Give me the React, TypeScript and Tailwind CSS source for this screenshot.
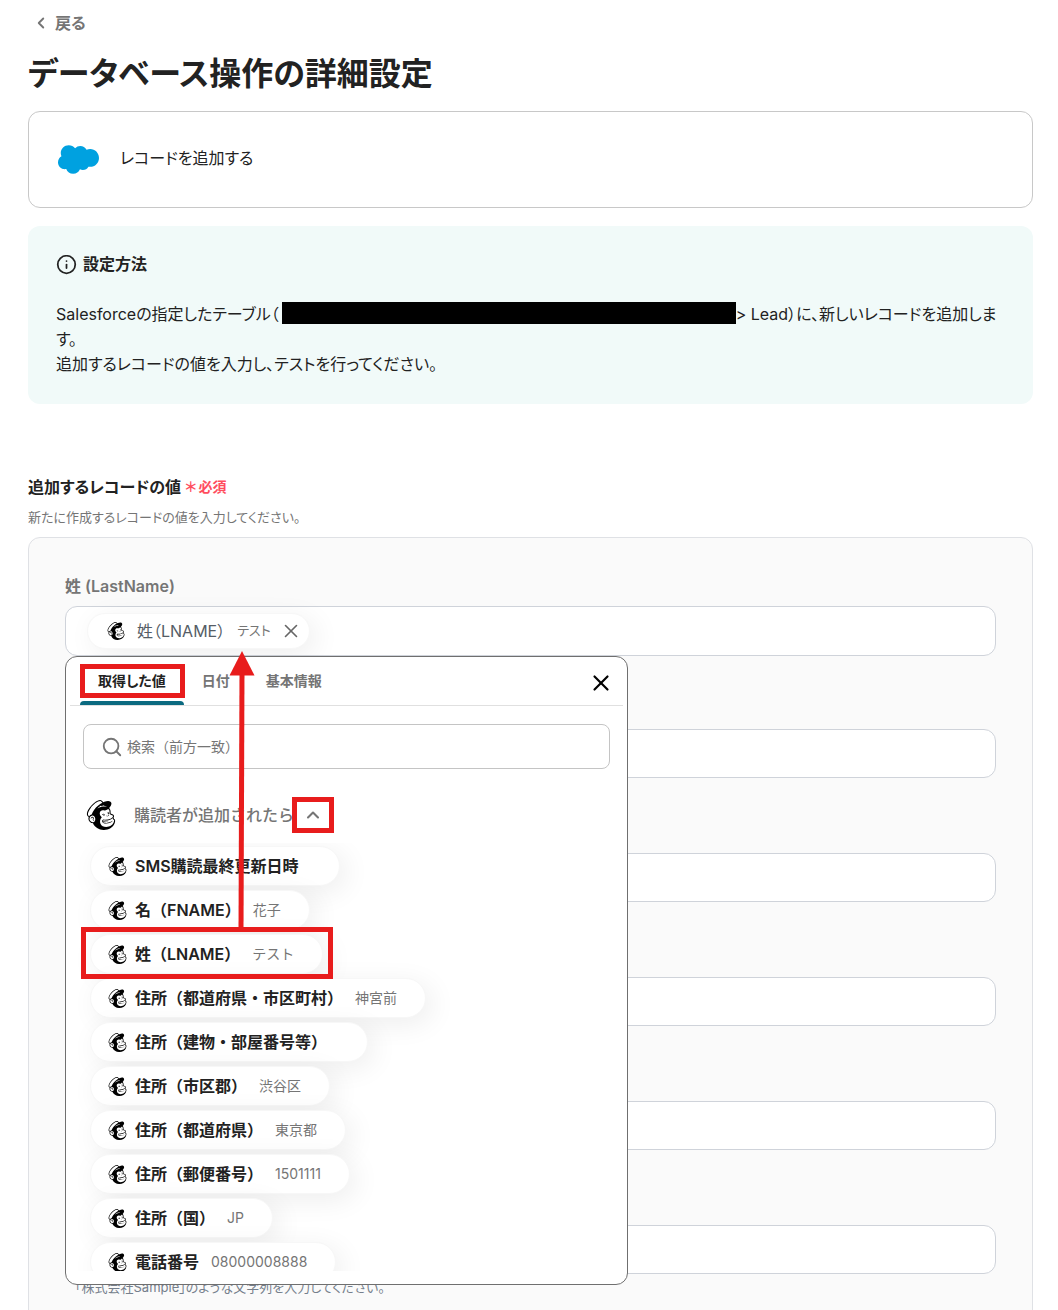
import { useState } from "react";
import { ChevronLeft, ChevronUp, Info, Search, X } from "lucide-react";
import { SiMailchimp } from "react-icons/si";

interface RecordField {
  id: string;
  help?: string;
}

interface OutputValue {
  name: string;
  value?: string;
  marked?: boolean;
}

const tabs = ["取得した値", "日付", "基本情報"];

const fields: RecordField[] = [
  { id: "FirstName" },
  { id: "Email" },
  { id: "Phone" },
  { id: "Title" },
  { id: "Company", help: "「株式会社Sample」のような文字列を入力してください。" },
];

const outputs: OutputValue[] = [
  { name: "SMS購読最終更新日時" },
  { name: "名（FNAME）", value: "花子" },
  { name: "姓（LNAME）", value: "テスト", marked: true },
  { name: "住所（都道府県・市区町村）", value: "神宮前" },
  { name: "住所（建物・部屋番号等）" },
  { name: "住所（市区郡）", value: "渋谷区" },
  { name: "住所（都道府県）", value: "東京都" },
  { name: "住所（郵便番号）", value: "1501111" },
  { name: "住所（国）", value: "JP" },
  { name: "電話番号", value: "08000008888" },
];

function SalesforceLogo() {
  return (
    <svg viewBox="0 3.6 24 16.8" className="h-[29px] w-[41px] shrink-0" fill="#00a1e0" aria-hidden="true">
      <path d="M10.006 5.415a4.195 4.195 0 013.045-1.306c1.56 0 2.954.9 3.69 2.205.63-.3 1.35-.45 2.1-.45 2.85 0 5.159 2.34 5.159 5.22s-2.31 5.22-5.176 5.22c-.345 0-.69-.044-1.02-.104a3.75 3.75 0 01-3.3 1.95c-.6 0-1.155-.15-1.65-.375A4.314 4.314 0 018.88 20.4a4.302 4.302 0 01-4.05-2.82c-.27.062-.54.076-.825.076-2.204 0-4.005-1.8-4.005-4.05 0-1.5.811-2.805 2.01-3.51-.255-.57-.39-1.2-.39-1.846 0-2.58 2.1-4.65 4.65-4.65 1.53 0 2.85.705 3.72 1.8" />
    </svg>
  );
}

// Red frame drawn around the element that it sits in
function Marker({ className }: { className: string }) {
  return (
    <span
      aria-hidden="true"
      className={`pointer-events-none absolute border-5 border-[#e81c1c] ${className}`}
    />
  );
}

// Pop-up list of the values that can be put into the field
function ValuePicker() {
  const [activeTab, setActiveTab] = useState(tabs[0]);
  const [query, setQuery] = useState("");

  return (
    <div className="absolute top-full left-0 z-10 w-[563px] rounded-xl border border-[#6f6f6f] bg-white px-1 pb-[13px]">
      {/* Tabs */}
      <div className="flex h-[49px] items-stretch border-b border-[#e0e0e0] pl-[10px] text-sm font-semibold text-[#757575] [font-feature-settings:'palt']">
        {tabs.map((tab) => (
          <button
            key={tab}
            type="button"
            onClick={() => setActiveTab(tab)}
            className={
              tab === activeTab
                ? "relative px-[18px] text-[#222]"
                : "relative px-[18px]"
            }
          >
            {tab}
            {tab === activeTab && (
              <>
                <span className="absolute inset-x-0 bottom-0 h-1 rounded-t bg-[#0b6a80]" />
                <Marker className="top-[7px] -right-px left-0 h-[34px]" />
              </>
            )}
          </button>
        ))}
        <button type="button" aria-label="閉じる" className="mr-[9px] ml-auto pt-1 text-black">
          <X size={26} strokeWidth={2} />
        </button>
      </div>

      {/* Search */}
      <label className="mx-[13px] mt-[18px] flex h-[45px] items-center gap-1 rounded-lg border border-[#c4c4c4] pl-[17px] text-[#757575]">
        <Search size={22} className="shrink-0" />
        <input
          type="text"
          value={query}
          onChange={(e) => setQuery(e.target.value)}
          placeholder="検索（前方一致）"
          aria-label="検索（前方一致）"
          className="w-full text-sm outline-none placeholder:text-[#757575]"
        />
      </label>

      {/* Trigger that the values come from */}
      <div className="mt-[17px] flex h-[57px] items-center pl-4">
        <SiMailchimp size={30} className="shrink-0 text-black" />
        <span className="ml-[18px] text-base font-medium text-[#757575]">購読者が追加されたら</span>
        <button type="button" aria-label="折りたたむ" className="relative -ml-0.5 flex h-9 w-[42px] items-center justify-center text-[#757575]">
          <ChevronUp size={20} strokeWidth={2.5} />
          <Marker className="inset-0" />
        </button>
      </div>

      {/* Values */}
      <div className="relative">
        <ul className="flex h-[428px] flex-col items-start gap-1 overflow-hidden pt-[3px] pl-5">
          {outputs.map((output) => (
            <li key={output.name}>
              <button
                type="button"
                className="flex h-10 items-center rounded-full border border-[#f7f7f7] bg-white pr-7 pl-[17px] shadow-[6px_6px_28px_rgba(0,0,0,0.07)]"
              >
                <SiMailchimp size={19} className="text-black" />
                <span className="ml-2 text-base font-semibold text-[#222]">{output.name}</span>
                <span className="ml-3 text-sm text-[#757575]">{output.value}</span>
              </button>
              {output.marked && <Marker className="top-[84px] left-[11px] h-[52px] w-[252px]" />}
            </li>
          ))}
        </ul>
      </div>

      {/* Arrow from the marked value up to the field */}
      <svg
        aria-hidden="true"
        viewBox="0 0 26 280"
        className="pointer-events-none absolute -top-[6px] left-[163px] h-[280px] w-[26px]"
      >
        <path d="M13 20 12 280" stroke="#e81c1c" strokeWidth="5" />
        <path d="M13 0 25.500 24.500H.5Z" fill="#e81c1c" />
      </svg>
    </div>
  );
}

export default function App() {
  const [selected, setSelected] = useState(true);

  return (
    <div className="h-screen overflow-hidden bg-white pr-[25px] pl-7 font-['Inter','Noto_Sans_CJK_JP',sans-serif] text-[#222]">
      <a
        href="#back"
        className="inline-flex items-center gap-[5px] pt-[11px] pl-1 text-base leading-6 font-semibold text-[#757575] [font-feature-settings:'palt']"
      >
        <ChevronLeft size={18} strokeWidth={2.5} />
        戻る
      </a>
      <h1 className="mt-[14px] text-[32px] leading-[44px] font-semibold [font-feature-settings:'palt']">
        データベース操作の詳細設定
      </h1>

      <main className="[font-feature-settings:'palt']">
        <section className="mt-[15px] flex h-[97px] items-center gap-[21px] rounded-xl border border-[#c8c8c8] pl-[29px] text-base">
          <SalesforceLogo />
          <span className="pb-1">レコードを追加する</span>
        </section>

        <section className="mt-[18px] rounded-xl bg-[#f1faf9] px-7 pt-[26px] pb-[27px]">
          <h2 className="flex items-center gap-[6px] text-base leading-6 font-semibold">
            <Info size={21} />
            設定方法
          </h2>
          <p className="mt-[26px] text-base leading-[25px]">
            Salesforceの指定したテーブル（
            <span className="ml-[3px] inline-block h-[22px] w-[454px] bg-black align-top" />
            &gt; Lead）に、新しいレコードを追加します。
            <br />
            追加するレコードの値を入力し、テストを行ってください。
          </p>
        </section>

        <h2 className="mt-[71px] flex items-center gap-1 text-base leading-6 font-semibold">
          追加するレコードの値
          <span className="flex gap-0.5 text-sm text-[#ff4d5e]">
            <span>＊</span>
            <span>必須</span>
          </span>
        </h2>
        <p className="mt-2 text-[13px] leading-5 text-[#757575]">
          新たに作成するレコードの値を入力してください。
        </p>

        <section className="mt-[10px] rounded-xl border border-[#dfe1e5] bg-[#fafafa] px-9 pt-9 pb-12">
          <div className="h-[123px]">
            <label htmlFor="LastName" className="block h-8 text-base leading-6 font-semibold text-[#757575]">
              姓 (LastName)
            </label>
            <div className="relative">
              <div className="flex h-[50px] items-center rounded-xl border border-[#cfd3da] bg-white pl-[21px]">
                {selected && (
                  <span className="flex h-9 shrink-0 items-center rounded-full border border-[#f7f7f7] bg-white pr-[7px] pl-[19px] text-[#555d66] shadow-[6px_6px_28px_rgba(0,0,0,0.07)]">
                    <SiMailchimp size={18} className="text-black" />
                    <span className="ml-3 text-base">姓（LNAME）</span>
                    <span className="ml-3 text-[13px] text-[#757575]">テスト</span>
                    <button type="button" aria-label="削除" onClick={() => setSelected(false)} className="ml-[9px] text-[#666]">
                      <X size={22} strokeWidth={1.75} />
                    </button>
                  </span>
                )}
                <input id="LastName" type="text" className="ml-2 min-w-0 flex-1 outline-none" />
              </div>
              <div className="[font-feature-settings:normal]">
                <ValuePicker />
              </div>
            </div>
          </div>

          {fields.map((field) => (
            <div key={field.id} className="h-[124px] pt-8">
              <input
                id={field.id}
                type="text"
                aria-label={field.id}
                className="block h-[49px] w-full rounded-xl border border-[#cfd3da] bg-white px-5 outline-none"
              />
              {field.help && (
                <p className="mt-[3px] pl-[10px] text-[13px] leading-5 text-[#757f8c]">{field.help}</p>
              )}
            </div>
          ))}
        </section>
      </main>
    </div>
  );
}
